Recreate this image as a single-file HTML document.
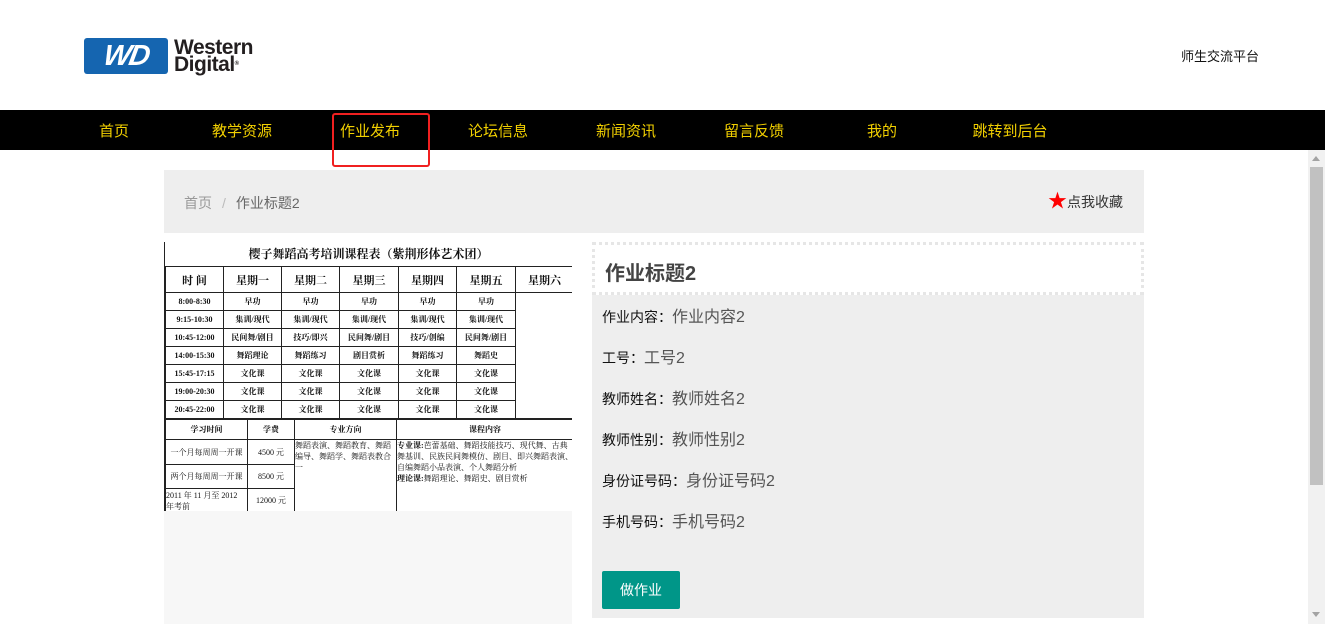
<!DOCTYPE html>
<html><head><meta charset="utf-8"><style>
*{margin:0;padding:0;box-sizing:border-box}
body{width:1325px;height:624px;overflow:hidden;background:#fff;font-family:"Liberation Sans","Noto Sans CJK SC",sans-serif;position:relative;color:#333}
.abs{position:absolute}
.nav{left:0;top:110px;width:1325px;height:40px;background:#000}
.nav span{position:absolute;top:2px;width:128px;text-align:center;line-height:40px;color:#f2d000;font-size:15px}
table{border-collapse:collapse;table-layout:fixed;font-family:"Liberation Serif","Noto Serif CJK SC",serif;color:#111}
td{border:1px solid #222;text-align:center;font-size:8px;font-weight:bold;padding:0;overflow:hidden;white-space:nowrap}
.lbl{font-size:14px;color:#111}
.val{font-size:16px;color:#555}
</style></head><body>
<!-- logo -->
<div class="abs" style="left:84px;top:38px;width:84px;height:36px;background:#1565b0;border-radius:3px;"></div>
<div class="abs" style="left:86px;top:38px;width:80px;height:36px;color:#fff;font:italic bold 29px/36px 'Liberation Sans',sans-serif;text-align:center;letter-spacing:-2px;transform:skewX(-10deg)">WD</div>
<div class="abs" style="left:174px;top:39px;font:bold 21px/17px 'Liberation Sans',sans-serif;color:#231f20;letter-spacing:-0.5px">Western<br>Digital<span style="font-size:6px;vertical-align:top">®</span></div>
<div class="abs" style="left:1181px;top:46px;font-size:13px;color:#111">师生交流平台</div>

<div class="abs nav">
<span style="left:50px">首页</span><span style="left:178px">教学资源</span><span style="left:306px">作业发布</span><span style="left:434px">论坛信息</span><span style="left:562px">新闻资讯</span><span style="left:690px">留言反馈</span><span style="left:818px">我的</span><span style="left:946px">跳转到后台</span>
</div>
<div class="abs" style="left:332px;top:113px;width:98px;height:54px;border:2px solid #f02020;border-radius:3px"></div>

<!-- scrollbar -->
<div class="abs" style="left:1308px;top:150px;width:17px;height:474px;background:#f1f1f1"></div>
<div class="abs" style="left:1310px;top:167px;width:13px;height:318px;background:#c1c1c1"></div>
<div class="abs" style="left:1312px;top:156px;width:0;height:0;border-left:4px solid transparent;border-right:4px solid transparent;border-bottom:5px solid #a3a3a3"></div>
<div class="abs" style="left:1312px;top:612px;width:0;height:0;border-left:4px solid transparent;border-right:4px solid transparent;border-top:5px solid #a3a3a3"></div>

<!-- breadcrumb -->
<div class="abs" style="left:164px;top:170px;width:980px;height:63px;background:#eee"></div>
<div class="abs" style="left:184px;top:193px;font-size:14px;color:#999">首页<span style="margin:0 10px;color:#bbb">/</span><span style="color:#666">作业标题2</span></div>
<div class="abs" style="left:1048px;top:192px;font-size:14px;color:#333"><span style="color:#f00;font-size:19px;line-height:18px">★</span>点我收藏</div>

<!-- image area -->
<div class="abs" style="left:164px;top:242px;width:408px;height:382px;background:#f7f7f7"></div>
<div class="abs" style="left:164px;top:242px;width:408px;height:269px;background:#fff;border-left:1px solid #222;overflow:hidden">
<div style="height:24px;text-align:center;font:bold 12px/24px 'Liberation Serif','Noto Serif CJK SC',serif;color:#111">樱子舞蹈高考培训课程表（紫荆形体艺术团）</div>
<table style="width:408px">
<colgroup><col style="width:58px"><col style="width:58px"><col style="width:58px"><col style="width:59px"><col style="width:58px"><col style="width:59px"><col style="width:58px"></colgroup>
<tr style="height:26px"><td style="font-size:11px">时 间</td><td style="font-size:11px">星期一</td><td style="font-size:11px">星期二</td><td style="font-size:11px">星期三</td><td style="font-size:11px">星期四</td><td style="font-size:11px">星期五</td><td style="font-size:11px">星期六</td></tr>
<tr style="height:18px"><td>8:00-8:30</td><td>早功</td><td>早功</td><td>早功</td><td>早功</td><td>早功</td><td rowspan="7"></td></tr>
<tr style="height:18px"><td>9:15-10:30</td><td>集训/现代</td><td>集训/现代</td><td>集训/现代</td><td>集训/现代</td><td>集训/现代</td></tr>
<tr style="height:18px"><td>10:45-12:00</td><td>民间舞/剧目</td><td>技巧/即兴</td><td>民间舞/剧目</td><td>技巧/创编</td><td>民间舞/剧目</td></tr>
<tr style="height:18px"><td>14:00-15:30</td><td>舞蹈理论</td><td>舞蹈练习</td><td>剧目赏析</td><td>舞蹈练习</td><td>舞蹈史</td></tr>
<tr style="height:18px"><td>15:45-17:15</td><td>文化课</td><td>文化课</td><td>文化课</td><td>文化课</td><td>文化课</td></tr>
<tr style="height:18px"><td>19:00-20:30</td><td>文化课</td><td>文化课</td><td>文化课</td><td>文化课</td><td>文化课</td></tr>
<tr style="height:18px"><td>20:45-22:00</td><td>文化课</td><td>文化课</td><td>文化课</td><td>文化课</td><td>文化课</td></tr>
</table>
<table style="width:408px">
<colgroup><col style="width:82px"><col style="width:47px"><col style="width:102px"><col style="width:177px"></colgroup>
<tr style="height:20px"><td>学习时间</td><td>学费</td><td>专业方向</td><td>课程内容</td></tr>
<tr style="height:25px"><td style="font-weight:normal">一个月每周周一开课</td><td style="font-weight:normal">4500 元</td><td rowspan="3" style="font-weight:normal;text-align:left;vertical-align:top;white-space:normal;line-height:11px">舞蹈表演、舞蹈教育、舞蹈编导、舞蹈学、舞蹈表教合一</td><td rowspan="3" style="font-weight:normal;text-align:left;vertical-align:top;white-space:normal;line-height:11px"><b>专业课:</b>芭蕾基础、舞蹈技能技巧、现代舞、古典舞基训、民族民间舞模仿、剧目、即兴舞蹈表演、自编舞蹈小品表演、个人舞蹈分析<br><b>理论课:</b>舞蹈理论、舞蹈史、剧目赏析</td></tr>
<tr style="height:24px"><td style="font-weight:normal">两个月每周周一开课</td><td style="font-weight:normal">8500 元</td></tr>
<tr style="height:24px"><td style="font-weight:normal;white-space:normal;text-align:left;line-height:11px">2011 年 11 月至 2012 年考前</td><td style="font-weight:normal">12000 元</td></tr>
</table>
</div>

<!-- right panel -->
<div class="abs" style="left:592px;top:242px;width:552px;height:376px;background:#eee"></div>
<div class="abs" style="left:592px;top:242px;width:552px;height:53px;background:#fff;border:3px dotted #e6e6e6"></div>
<div class="abs" style="left:605px;top:257px;font-size:20px;font-weight:bold;color:#444">作业标题2</div>
<div class="abs" style="left:602px;top:303px"><span class="lbl">作业内容：</span><span class="val">作业内容2</span></div>
<div class="abs" style="left:602px;top:344px"><span class="lbl">工号：</span><span class="val">工号2</span></div>
<div class="abs" style="left:602px;top:385px"><span class="lbl">教师姓名：</span><span class="val">教师姓名2</span></div>
<div class="abs" style="left:602px;top:426px"><span class="lbl">教师性别：</span><span class="val">教师性别2</span></div>
<div class="abs" style="left:602px;top:467px"><span class="lbl">身份证号码：</span><span class="val">身份证号码2</span></div>
<div class="abs" style="left:602px;top:508px"><span class="lbl">手机号码：</span><span class="val">手机号码2</span></div>
<div class="abs" style="left:602px;top:571px;width:78px;height:38px;background:#009688;border-radius:2px;color:#fff;font-size:14px;line-height:38px;text-align:center">做作业</div>
</body></html>
